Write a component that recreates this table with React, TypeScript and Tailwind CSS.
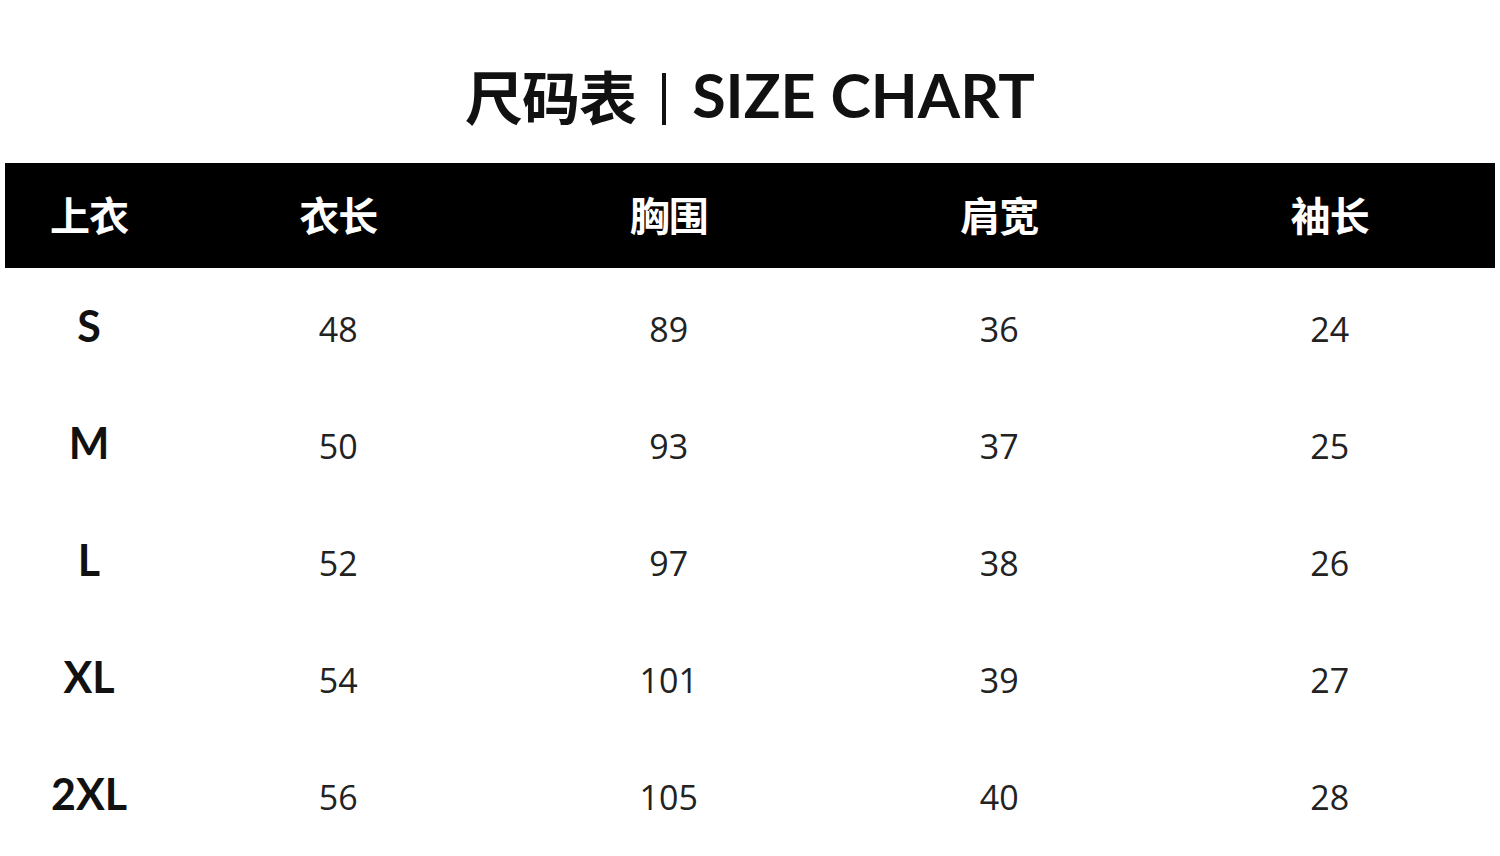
const rows = [
  { size: "S", values: ["48", "89", "36", "24"] },
  { size: "M", values: ["50", "93", "37", "25"] },
  { size: "L", values: ["52", "97", "38", "26"] },
  { size: "XL", values: ["54", "101", "39", "27"] },
  { size: "2XL", values: ["56", "105", "40", "28"] },
]

const headers = ["衣长", "胸围", "肩宽", "袖长"]

const font = "font-['Lato','Noto_Sans_CJK_SC',sans-serif]"

export default function App() {
  return (
    <div className={`w-[1500px] h-[856px] bg-white overflow-hidden ${font}`}>
      {/* Title */}
      <div className="h-[163px] flex items-center justify-center pt-[26px]">
        <h1 className="flex items-center text-[58px] font-bold text-[#111] leading-none">
          <span className="font-['Noto_Sans_CJK_SC',sans-serif] font-bold tracking-[-1px]">尺码表</span>
          <span className="inline-block w-[4px] h-[52px] bg-[#111] mx-[26px] mt-[8px]" />
          <span className="text-[61px]">SIZE CHART</span>
        </h1>
      </div>

      {/* Header bar */}
      <div className="mx-[5px] h-[105px] bg-black flex items-center text-white">
        <div className="w-[168px] text-center text-[40px] font-bold font-['Noto_Sans_CJK_SC',sans-serif] tracking-[-1px] pb-[4px]">
          上衣
        </div>
        {headers.map((h) => (
          <div
            key={h}
            className="flex-1 text-center text-[40px] font-bold font-['Noto_Sans_CJK_SC',sans-serif] tracking-[-1px] pb-[4px]"
          >
            {h}
          </div>
        ))}
      </div>

      {/* Rows */}
      <div className="mx-[5px]">
        {rows.map((r) => (
          <div key={r.size} className="h-[117px] flex items-center">
            <div className="w-[168px] text-center text-[43px] font-bold text-[#111]">
              {r.size}
            </div>
            {r.values.map((v, i) => (
              <div
                key={i}
                className="flex-1 text-center text-[34px] text-[#222] font-['Open_Sans',sans-serif] pt-[6px]"
              >
                {v}
              </div>
            ))}
          </div>
        ))}
      </div>
    </div>
  )
}
